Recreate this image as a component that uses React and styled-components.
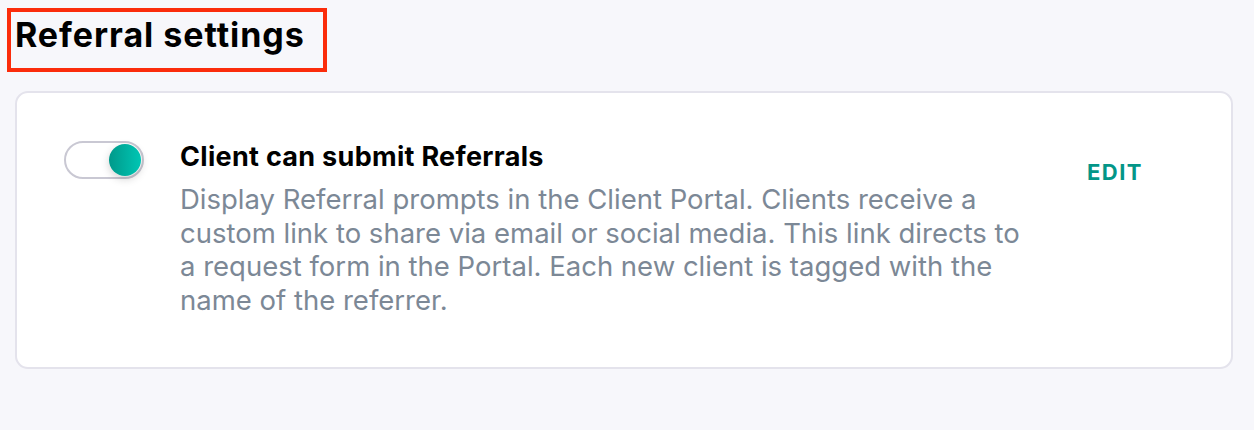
import React from 'react';
import styled, { createGlobalStyle } from 'styled-components';

const GlobalStyle = createGlobalStyle`
  html, body {
    margin: 0;
    padding: 0;
    background: #f7f7fb;
  }

  body {
    font-family: Inter, 'Noto Sans', 'Liberation Sans', sans-serif;
    -webkit-font-smoothing: antialiased;
  }
`;

const Page = styled.div`
  min-height: 430px;
  padding: 8px 21px 0 15px;
  box-sizing: border-box;
`;
Page.displayName = 'Page';

const TitleBox = styled.div`
  display: inline-block;
  margin-left: -8px;
  width: 320px;
  height: 64px;
  box-sizing: border-box;
  border: 4px solid #fb2c0b;
  padding: 3px 0 0 4px;
`;
TitleBox.displayName = 'TitleBox';

const PageTitle = styled.h1`
  margin: 0;
  font-size: 34px;
  line-height: 40px;
  font-weight: 700;
  color: #000;
  letter-spacing: 0.95px;
  white-space: nowrap;
`;
PageTitle.displayName = 'PageTitle';

const Card = styled.section`
  margin-top: 19px;
  display: grid;
  grid-template-columns: 80px 1fr auto;
  column-gap: 36px;
  align-items: start;
  padding: 48px 88px 50px 47px;
  background: #fff;
  border: 2px solid #e4e3ec;
  border-radius: 13px;
`;
Card.displayName = 'Card';

const Toggle = styled.button`
  position: relative;
  width: 80px;
  height: 38px;
  padding: 0;
  border: 2px solid #c9c8d3;
  border-radius: 19px;
  background: #fff;
  cursor: pointer;

  &::after {
    content: '';
    position: absolute;
    top: 1px;
    right: 1px;
    width: 32px;
    height: 32px;
    border-radius: 50%;
    background: linear-gradient(90deg, #00998a 0%, #00c6b4 100%);
    box-shadow: 0 3px 8px rgba(0, 0, 0, 0.18);
  }
`;
Toggle.displayName = 'Toggle';

const Body = styled.div`
  max-width: 846px;
`;
Body.displayName = 'Body';

const SettingTitle = styled.h3`
  margin: 0;
  font-size: 27px;
  line-height: 32px;
  font-weight: 700;
  color: #000;
  letter-spacing: 0.3px;
`;
SettingTitle.displayName = 'SettingTitle';

const Description = styled.p`
  margin: 10px 0 0;
  font-size: 27.5px;
  line-height: 33.5px;
  font-weight: 400;
  color: #7c8896;
`;
Description.displayName = 'Description';

const EditButton = styled.button`
  margin-top: 18px;
  padding: 0;
  border: none;
  background: none;
  font-family: inherit;
  font-size: 22px;
  line-height: 26px;
  font-weight: 700;
  letter-spacing: 1.5px;
  color: #039688;
  cursor: pointer;
`;
EditButton.displayName = 'EditButton';

export default function App() {
  return (
    <Page>
      <GlobalStyle />
      <TitleBox>
        <PageTitle>Referral settings</PageTitle>
      </TitleBox>

      <Card>
        <Toggle aria-pressed="true" aria-label="Client can submit Referrals" />
        <Body>
          <SettingTitle>Client can submit Referrals</SettingTitle>
          <Description>
            Display Referral prompts in the Client Portal. Clients receive a
            custom link to share via email or social media. This link directs to
            a request form in the Portal. Each new client is tagged with the
            name of the referrer.
          </Description>
        </Body>
        <EditButton>EDIT</EditButton>
      </Card>
    </Page>
  );
}
